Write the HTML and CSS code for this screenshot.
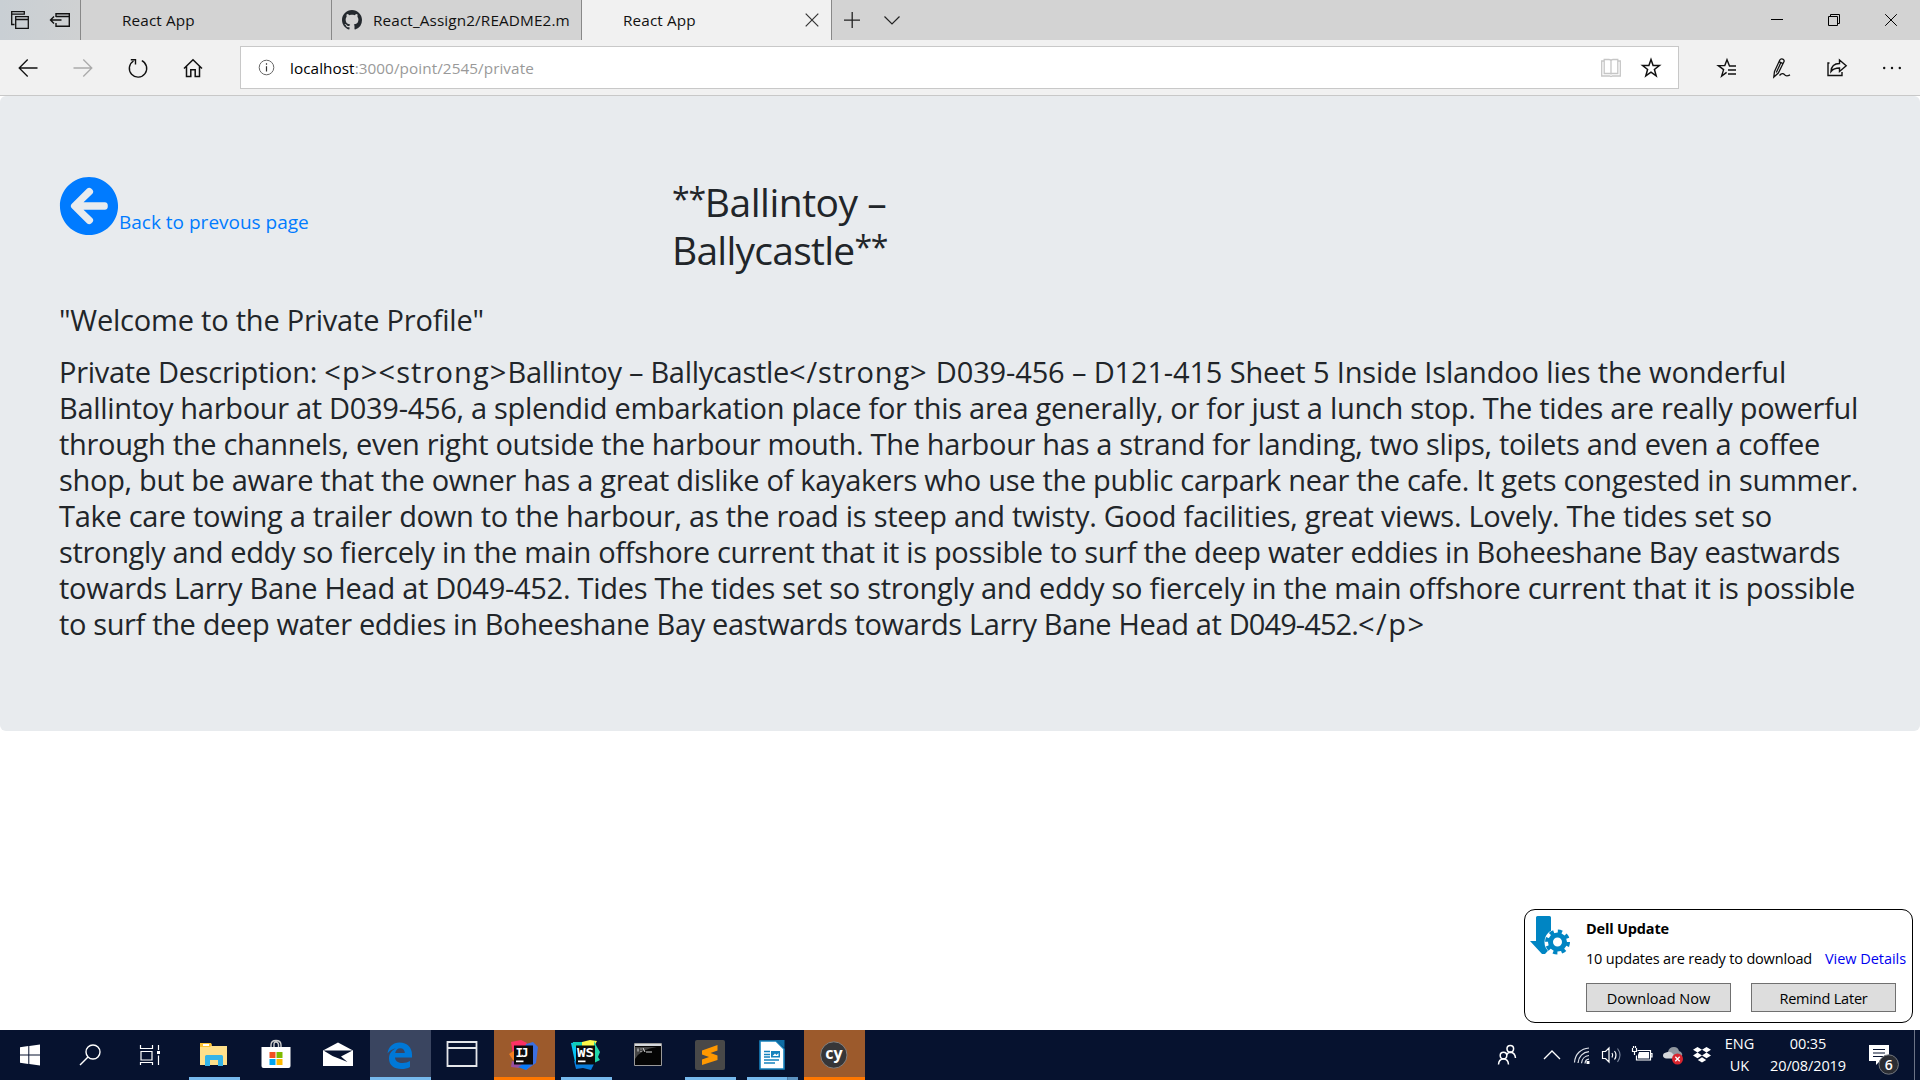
FILE: index.html
```html
<!DOCTYPE html>
<html lang="en">
<head>
<meta charset="utf-8">
<title>React App</title>
<link rel="stylesheet" href="styles.css">
</head>
<body>
<div class="desktop">
  <header class="tabstrip">
    <div class="tab-tools">
      <svg width="20" height="20" viewBox="0 0 20 20" fill="none" stroke="#111" stroke-width="1.300"><path d="M4.500 14.500H1.700V1.700h12.600v3M1.700 4.200h12.600"/><path d="M5.700 6.700h12.600v11.600H5.700zM5.700 9.500h12.600"/></svg>
      <svg width="22" height="20" viewBox="0 0 22 20" fill="none" stroke="#111" stroke-width="1.400"><path d="M7 7V3.700h13.300v12.600H7V13M7 6.500h13.300M1.500 10h11M5 6.500L1.500 10 5 13.500"/></svg>
    </div>
    <div class="tab"><span class="tab-title">React App</span></div>
    <div class="tab tab-git">
      <svg width="20" height="20" viewBox="0 0 16 16" fill="#24292e"><path d="M8 0C3.580 0 0 3.580 0 8c0 3.540 2.290 6.530 5.470 7.590.4.070.55-.17.55-.38 0-.19-.01-.82-.01-1.490-2.010.37-2.530-.49-2.690-.94-.09-.23-.48-.94-.82-1.130-.28-.15-.68-.52-.01-.53.630-.01 1.080.58 1.230.82.720 1.210 1.870.87 2.330.66.070-.52.280-.87.510-1.070-1.780-.2-3.640-.89-3.640-3.950 0-.87.310-1.590.82-2.150-.08-.2-.36-1.020.08-2.120 0 0 .67-.21 2.200.82.640-.18 1.320-.27 2-.27s1.360.09 2 .27c1.530-1.040 2.200-.82 2.200-.82.440 1.100.160 1.920.08 2.120.510.560.82 1.270.82 2.150 0 3.070-1.870 3.750-3.650 3.950.290.250.540.730.540 1.480 0 1.070-.01 1.930-.01 2.200 0 .21.150.460.550.380A8.010 8.010 0 0 0 16 8c0-4.420-3.580-8-8-8z"/></svg>
      <span class="tab-title">React_Assign2/README2.m</span>
    </div>
    <div class="tab tab-active"><span class="tab-title">React App</span>
      <svg width="14" height="14" viewBox="0 0 14 14" fill="none" stroke="#333" stroke-width="1.200"><path d="M.7.7l12.600 12.600M13.300.7L.7 13.300"/></svg>
    </div>
    <div class="tab-new">
      <svg width="18" height="18" viewBox="0 0 18 18" fill="none" stroke="#222" stroke-width="1.300"><path d="M9.200 1v16M1 9.200h16"/></svg>
      <svg width="18" height="18" viewBox="0 0 18 18" fill="none" stroke="#222" stroke-width="1.200"><path d="M1.500 5.500l7.500 7.500 7.500-7.500"/></svg>
    </div>
    <div class="window-controls">
      <span><svg width="14" height="14" viewBox="0 0 14 14" stroke="#000"><path d="M1 6.500h12"/></svg></span>
      <span><svg width="14" height="14" viewBox="0 0 14 14" fill="none" stroke="#000"><path d="M1.500 3.500h9v9h-9zM3.500 3.500v-2h9v9h-2"/></svg></span>
      <span><svg width="14" height="14" viewBox="0 0 14 14" stroke="#000"><path d="M1.200 1.200l11.600 11.600M12.800 1.200L1.200 12.800"/></svg></span>
    </div>
  </header>

  <nav class="toolbar">
    <span class="tool"><svg width="20" height="20" viewBox="0 0 20 20" fill="none" stroke="#111" stroke-width="1.300"><path d="M19.500 10H1.200M9.700 1.500L1.200 10l8.500 8.500"/></svg></span>
    <span class="tool"><svg width="20" height="20" viewBox="0 0 20 20" fill="none" stroke="#aaa" stroke-width="1.300"><path d="M.5 10h18.300M10.300 1.500l8.500 8.500-8.500 8.500"/></svg></span>
    <span class="tool"><svg width="22" height="22" viewBox="0 0 22 22" fill="none" stroke="#111" stroke-width="1.400"><path d="M14.800 3.600A8.700 8.700 0 1 1 6.500 4M3.800 2.700h4.700v4.700"/></svg></span>
    <span class="tool"><svg width="20" height="20" viewBox="0 0 20 20" fill="none" stroke="#111" stroke-width="1.500"><path d="M1 10.500L10 1.700l9 8.800M3.500 8.500v10h4.300v-6.800h4.400v6.800h4.300v-10"/></svg></span>
    <div class="address">
      <svg width="17" height="17" viewBox="0 0 17 17" fill="none" stroke="#666"><circle cx="8.500" cy="8.500" r="7.300"/><path d="M8.500 7.200v5.300M8.500 4.300v1.400" stroke="#333" stroke-width="1.200"/></svg>
      <span class="url"><b>localhost</b>:3000/point/2545/private</span>
      <svg class="book" width="22" height="20" viewBox="0 0 22 20" fill="none" stroke="#c6c6c6" stroke-width="1.300"><path d="M11 3v13.500M4.200 1.500H9q2 0 2 1.500 0-1.500 2-1.500h4.800v14H4.200zM4 3H1.700v15h7.800l1.500.6 1.500-.6h7.800V3H18"/></svg>
      <svg width="22" height="22" viewBox="0 0 22 22" fill="none" stroke="#111" stroke-width="1.500"><path d="M11 2.500l2.100 6.100h6.300l-5 3.900 1.800 6.300L11 15.100l-5.200 3.700 1.800-6.300-5-3.900h6.300z"/></svg>
    </div>
    <span class="tool"><svg width="22" height="22" viewBox="0 0 22 22" fill="none" stroke="#111" stroke-width="1.400"><path d="M19.500 9h-6L11 2.700 8.800 8.600H2.300l5.300 4-2 6.500 5-3.700M12 13h8M12 17h8M13 9h7"/></svg></span>
    <span class="tool"><svg width="22" height="22" viewBox="0 0 22 22" fill="none" stroke="#111" stroke-width="1.300"><path d="M3.500 14.500L8.800 3q1-1.800 3-.8t1 2.800L7.300 16l-4.500 4zM8 4.700l4 2M9.800 5.800l-4.500 9.700"/><path d="M8.500 18.500c2-2.500 4-2.200 5-.8s2.500 1.800 5.500.2"/></svg></span>
    <span class="tool"><svg width="22" height="22" viewBox="0 0 22 22" fill="none" stroke="#111" stroke-width="1.400"><path d="M3.500 6H2v12.500h14V15"/><path d="M5 14.500c.3-5 3.200-8 8.500-8V3l6.700 5.800-6.700 5.700V11C9 11 7 12 5 14.500z"/></svg></span>
    <span class="tool"><svg width="22" height="22" viewBox="0 0 22 22" fill="#111"><circle cx="3.200" cy="11" r="1.200"/><circle cx="11" cy="11" r="1.200"/><circle cx="18.800" cy="11" r="1.200"/></svg></span>
  </nav>

  <main class="page">
    <section class="jumbotron">
      <div class="heading-row">
        <a class="back"><svg width="60" height="60" viewBox="0 0 512 512" fill="currentColor"><path d="M256 504C119 504 8 393 8 256S119 8 256 8s248 111 248 248-111 248-248 248zm28.900-143.600L209.400 288H392c13.300 0 24-10.700 24-24v-16c0-13.300-10.700-24-24-24H209.400l75.500-72.400c9.700-9.300 9.900-24.800.4-34.300l-11-10.900c-9.400-9.400-24.600-9.400-33.900 0L107.700 239c-9.400 9.400-9.400 24.600 0 33.900l132.700 132.700c9.400 9.400 24.600 9.400 33.900 0l11-10.900c9.500-9.500 9.300-25-.4-34.300z"/></svg><span>Back to prevous page</span></a>
        <h2><span class="stars">**</span>Ballintoy –<br><span class="tight">Ballycastle</span><span class="stars">**</span></h2>
      </div>
      <h4 class="welcome">"Welcome to the Private Profile"</h4>
      <h4 class="description">
        <span class="l1"><span class="l1-label">Private Description: </span><span class="l1-open">&lt;p&gt;&lt;strong&gt;</span><span class="l1-label">Ballintoy – Ballycastle</span><span class="l1-close">&lt;/strong&gt; </span>D039-456 – D121-415 Sheet 5 Inside Islandoo lies the wonderful</span>
        <span class="l2">Ballintoy harbour at D039-456, a splendid embarkation place for this area generally, or for just a lunch stop. The tides are really powerful</span>
        <span class="l3">through the channels, even right outside the harbour mouth. The harbour has a strand for landing, two slips, toilets and even a coffee</span>
        <span class="l4">shop, but be aware that the owner has a great dislike of kayakers who use the public carpark near the cafe. It gets congested in summer.</span>
        <span class="l5">Take care towing a trailer down to the harbour, as the road is steep and twisty. Good facilities, great views. Lovely. The tides set so</span>
        <span class="l6">strongly and eddy so fiercely in the main offshore current that it is possible to surf the deep water eddies in Boheeshane Bay eastwards</span>
        <span class="l7">towards Larry Bane Head at D049-452. Tides The tides set so strongly and eddy so fiercely in the main offshore current that it is possible</span>
        <span class="l8">to surf the deep water eddies in Boheeshane Bay eastwards towards Larry Bane Head at <span class="l8-ref">D049-452.</span><span class="l8-close">&lt;/p&gt;</span></span>
      </h4>
    </section>
  </main>

  <footer class="taskbar">
    <span class="task"><svg width="32" height="32" viewBox="0 0 32 32" fill="#fff"><path d="M6 8.200l8.300-1.200v8.500H6zM15.300 6.900L26 5.500v10H15.300zM6 16.500h8.300V25L6 23.800zM15.300 16.500H26v10l-10.700-1.400z"/></svg></span>
    <span class="task"><svg width="32" height="32" viewBox="0 0 32 32" fill="none" stroke="#fff" stroke-width="1.400"><circle cx="18" cy="13" r="7"/><path d="M13 18l-8 8"/></svg></span>
    <span class="task"><svg width="32" height="32" viewBox="0 0 32 32" fill="none" stroke="#fff" stroke-width="1.200"><path d="M4.500 6v3.500h12V6M5 12.500h11v8.500H5zM4.500 26v-2.500h12V26M22.500 6v5M22.500 16.500V26"/><path d="M21 12h3v3h-3z" fill="#fff" stroke="none"/></svg></span>
    <span class="task running"><svg width="32" height="32" viewBox="0 0 32 32"><path d="M2 4h10l2 3h15v19H2z" fill="#ffe08a"/><path d="M2 4h11l1 2-2 2H2z" fill="#fcc233"/><path d="M5 5h6v2H5z" fill="#fff"/><path d="M7 27V17.500q0-1.500 1.500-1.500h15q1.500 0 1.500 1.500V27h-5v-6h-8v6z" fill="#35b4e8"/></svg></span>
    <span class="task"><svg width="32" height="32" viewBox="0 0 32 32"><path d="M11 9V6q0-4.500 5-4.500T21 6v3M14 8V5.500Q14 3 16 3t2.500 2.500V8" fill="none" stroke="#ccc" stroke-width="1.400"/><path d="M1.500 8h29v19q0 2-2 2h-25q-2 0-2-2z" fill="#fff"/><path d="M9.500 13h6v6h-6z" fill="#f25022"/><path d="M16.500 13h6v6h-6z" fill="#7fba00"/><path d="M9.500 20h6v6h-6z" fill="#00a4ef"/><path d="M16.500 20h6v6h-6z" fill="#ffb900"/></svg></span>
    <span class="task"><svg width="32" height="32" viewBox="0 0 32 32"><path d="M1 11.500L16 3.500l15 8V27H1z" fill="#fff"/><path d="M1.500 11.500h29L19 17.500l6.500 5.500-15-6z" fill="#06122f"/></svg></span>
    <span class="task running focused"><svg width="32" height="32" viewBox="0 0 32 32"><path d="M3.500 14.500C4.500 7.500 9 3.500 15.500 3.500c8 0 12.500 5.500 12.500 12v3H11c.3 4 3.500 5.500 7.500 5.500 3 0 5.500-.8 7.500-2v6c-2.500 1.400-5.500 2-8.500 2C10 30 5 26 5 19.500 5 14.500 8 11 12 9.200c-3.500.5-6.500 2.500-8.500 5.300zM11.200 14h9.600c0-3-1.800-4.700-4.500-4.700-2.600 0-4.500 1.700-5.100 4.700z" fill="#0078d7"/></svg></span>
    <span class="task"><svg width="32" height="32" viewBox="0 0 32 32" fill="none" stroke="#e4e6ea" stroke-width="1.800"><path d="M1.500 3h29v24h-29zM1.500 9h29"/></svg></span>
    <span class="task alert"><svg width="32" height="32" viewBox="0 0 32 32"><path d="M3 3l10-2 6 3-3 12H5z" fill="#fc3164"/><path d="M1 15l6-4 4 12-6-2z" fill="#f57f20"/><path d="M18 5l7-2 5 5-2 16-10 7-6-4z" fill="#3b6fe0"/><path d="M4 22l9 3-2 4-8-1z" fill="#9a4fa0"/><path d="M20 24l5-2-7 9-8-3z" fill="#087cfa"/><path d="M6 6.500h19v19H6z" fill="#0b0b0b"/><path d="M8 21.500h7.500v1.700H8z" fill="#fff"/><text x="7.500" y="17.500" class="mono" textLength="13">IJ</text></svg></span>
    <span class="task running"><svg width="32" height="32" viewBox="0 0 32 32"><path d="M1 4l9-1 4 22-8 3z" fill="#07c3f2"/><path d="M12 3l8-2 7 1-4 7-12-1z" fill="#fcf84a"/><path d="M24 2l3 6 3 5-2 5 2 3-6 3z" fill="#21d7a8"/><path d="M4 22l14 2 6 1-3 6-8-2-7 1z" fill="#087cda"/><path d="M3 3h9v5H3z" fill="#12cdb8"/><path d="M6 6.500h19v19H6z" fill="#0b0b0b"/><path d="M8 21.500h7.500v1.700H8z" fill="#fff"/><text x="7" y="17.500" class="mono" textLength="17" lengthAdjust="spacingAndGlyphs">WS</text></svg></span>
    <span class="task"><svg width="32" height="32" viewBox="0 0 32 32"><path d="M2.500 4.500h27v22h-27z" fill="#050505" stroke="#999" stroke-width="1"/><path d="M3 5h26v2H3z" fill="#d5d8dc"/><path d="M3 8h22Q9 10 3 20z" fill="#444"/><path d="M6 9.500v3M9 9.500v1M9 12v1M11 9l2 4M14 13h6" stroke="#ddd" fill="none"/></svg></span>
    <span class="task running"><svg width="32" height="32" viewBox="0 0 32 32"><rect x="1" y="1" width="30" height="30" rx="2" fill="#484848"/><path d="M8 11.500L23.500 6v5.500l-7 2.500 7 2.500V21L8 26v-5.500l7-2.500-7-2.500z" fill="#ff9800"/></svg></span>
    <span class="task running stacked"><svg width="32" height="32" viewBox="0 0 32 32"><path d="M4 2h16l8 8v20H4z" fill="#fff" stroke="#1682bd" stroke-width="1.600"/><path d="M19 1h9.500v8z" fill="#0e6ca3"/><path d="M8 12.500h6M8 15.500h6M8 18h6M8 21h15M8 24h11" stroke="#1682bd" stroke-width="1.400"/><path d="M15 12h9v6.500h-9z" fill="#1682bd"/><path d="M16.500 17l2.500-2.500 1.500 1.500 2-2v3z" fill="#fff"/></svg></span>
    <span class="task alert"><svg width="32" height="32" viewBox="0 0 32 32"><circle cx="15.800" cy="16" r="13.200" fill="#363638" stroke="#85817e" stroke-width="1"/><text x="16" y="20" text-anchor="middle" class="cy">cy</text></svg></span>

    <div class="tray">
      <span class="slot people"><svg width="22" height="22" viewBox="0 0 22 22" fill="none" stroke="#fff" stroke-width="1.500"><circle cx="14.300" cy="4.800" r="3.300"/><path d="M10.500 11q1.500-2.800 4-2.800 4.500.3 5 5.800"/><circle cx="7.500" cy="11.500" r="3.300"/><path d="M2.500 20.500q.3-5.500 5-5.500t5 5.500"/></svg></span>
      <span class="slot"><svg width="18" height="12" viewBox="0 0 18 12" fill="none" stroke="#fff" stroke-width="1.300"><path d="M1 10l8-8 8 8"/></svg></span>
      <span class="slot"><svg width="20" height="20" viewBox="0 0 20 20" fill="none" stroke="#fff" stroke-width="1.200"><path d="M2.500 17.500C3 9 9 3.500 17 3M6 18C6.500 11.500 11 7.200 17 6.700M9.500 18.300c.3-4.500 3.500-7.500 7.500-7.800M13 18.500c.2-2.500 1.800-4.200 4-4.300" stroke="#dfe3ea"/><path d="M14.500 16h3v3h-3z" fill="#fff" stroke="none"/></svg></span>
      <span class="slot"><svg width="22" height="20" viewBox="0 0 22 20" fill="none" stroke="#fff" stroke-width="1.200"><path d="M1.500 6.500h3L8 3v14l-3.500-3.500h-3zM11 8q1.500 2 0 4.500M13.500 6q3 4 0 8.500"/><path d="M16.500 3.500q5 6.500 0 13.500" stroke="#78839a"/></svg></span>
      <span class="slot"><svg width="22" height="18" viewBox="0 0 22 18" fill="none" stroke="#fff" stroke-width="1.200"><path d="M6.500 4.500h13V14h-14V9.500M19.500 7.500h1.500V11h-1.500"/><path d="M8 6h10v6.500H7V9z" fill="#fff" stroke="none"/><path d="M1.500 2v3.500h4V2M2.500 0v2M4.500 0v2M3.500 5.500V9"/></svg></span>
      <span class="slot cloud"><svg width="22" height="20" viewBox="0 0 22 20"><path d="M6 7q1-5 6-5 4 0 5 4l2 1q2 2 1 4H6z" fill="#8f969f"/><path d="M4 7.500q5-2 7.500 2l4 4H4.500Q1 13 1 10.500T4 7.500z" fill="#d4d7db"/><circle cx="15.500" cy="14" r="5.500" fill="#d9252e"/><path d="M13.300 11.800l4.400 4.400M17.700 11.800l-4.400 4.400" stroke="#fff" stroke-width="1.300"/></svg></span>
      <span class="slot dropbox"><svg width="18" height="18" viewBox="0 0 18 18" fill="#fff"><path d="M4.500 1L9 3.800 4.500 6.600 0 3.800zM13.500 1L18 3.800l-4.500 2.800L9 3.800zM4.500 6.600L9 9.400l-4.500 2.800L0 9.400zM13.500 6.600L18 9.400l-4.500 2.800L9 9.400zM9 11.200l4.200 2.700L9 16.600l-4.200-2.700z"/></svg></span>
      <span class="lang"><span>ENG</span><span>UK</span></span>
      <span class="clock"><span>00:35</span><span class="date">20/08/2019</span></span>
      <span class="action"><svg width="40" height="44" viewBox="0 -6 40 44"><path d="M6 6h20v16H17l-4 4v-4H6z" fill="#fff"/><path d="M10 10.500h12M10 14h12M10 17.500h12" stroke="#06122f" stroke-width="1.200"/><circle cx="25.700" cy="25.500" r="9.700" fill="#2b2d33" stroke="#75797f" stroke-width="1"/><text x="25.700" y="30.700" text-anchor="middle" class="count">6</text></svg></span>
    </div>
  </footer>

  <aside class="toast">
    <svg width="42" height="42" viewBox="0 0 42 42"><path d="M7 2.500q0-1.500 1.500-1.500h12q1.500 0 1.500 1.500V26h6L16 39H13L1 26h6z" fill="#0085c3"/><circle cx="28.500" cy="27" r="13" fill="#fff"/><circle cx="28.500" cy="27" r="7" fill="none" stroke="#0085c3" stroke-width="5"/><circle cx="28.500" cy="27" r="10.500" fill="none" stroke="#0085c3" stroke-width="4" stroke-dasharray="4.200 4.047"/></svg>
    <div class="toast-body">
      <strong>Dell Update</strong>
      <p>10 updates are ready to download<a>View Details</a></p>
      <div class="toast-actions"><button>Download Now</button><button class="later">Remind Later</button></div>
    </div>
  </aside>
</div>
</body>
</html>
```
FILE: styles.css
```css
* { box-sizing: border-box; }
body { margin: 0; font-family: "Open Sans", "Noto Sans", sans-serif; color: #212529; }
svg { display: block; flex: none; }

.desktop { position: relative; display: flex; flex-direction: column; width: 1920px; height: 1080px; overflow: hidden; background: #fff; }

/* Browser tabs */
.tabstrip { display: flex; height: 40px; background: #d3d3d3; font-size: 15.3px; letter-spacing: .12px; color: #111; }
.tab-tools { display: flex; align-items: center; gap: 19px; width: 80px; padding-left: 10px; background: linear-gradient(90deg, #c9cfd4, #cfd1d2); }
.tab { display: flex; align-items: center; width: 251px; padding-left: 41px; border-left: 1px solid #888; }
.tab-title { white-space: nowrap; line-height: 20px; }
.tab-git { width: 250px; padding-left: 10px; gap: 11px; }
.tab-active { width: 251px; background: #f1f1f1; border-right: 1px solid #888; justify-content: space-between; padding-right: 12px; }
.tab-new { display: flex; align-items: center; gap: 22px; padding-left: 11px; }
.window-controls { display: flex; margin-left: auto; padding-right: 1px; }
.window-controls span { display: flex; align-items: center; justify-content: center; width: 57px; }

/* Address bar */
.toolbar { display: flex; align-items: center; height: 56px; background: #f1f1f1; border-bottom: 1px solid #c8c8c8; }
.tool { display: flex; justify-content: center; width: 55px; }
.address { display: flex; align-items: center; width: 1439px; height: 43px; margin: 0 20px; padding: 0 16px 0 17px; background: #fff; border: 1px solid #c8c8c8; }
.url { margin-left: 15px; padding-top: 1px; font-size: 15.3px; letter-spacing: .06px; color: #999; white-space: nowrap; }
.url b { font-weight: 400; color: #000; }
.book { margin-left: auto; margin-right: 18px; }

/* Page content */
.page { flex: 1; }
.jumbotron { height: 635px; padding: 80px 59px; background: #e8ebee; border-radius: 6px; }
.jumbotron h2, .jumbotron h4 { margin: 0; font-weight: 400; white-space: nowrap; }
.heading-row { display: grid; grid-template-columns: 613px auto; height: 126px; }
.back { display: flex; align-items: flex-start; color: #007bff; font-size: 19px; line-height: 30px; white-space: nowrap; }
.back span { margin-top: 31px; }
.jumbotron h2 { font-size: 39px; line-height: 48px; padding-top: 2px; letter-spacing: -.5px; }
.stars { font-size: 32px; line-height: 0; vertical-align: 6px; letter-spacing: -1.200px; }
.tight { letter-spacing: -.75px; }
.jumbotron h4 { font-size: 29px; line-height: 36px; }
.welcome { letter-spacing: -.21px; }
.description { display: flex; flex-direction: column; align-items: flex-start; padding-top: 16px; }
.description span { white-space: pre; }
.l1 { letter-spacing: -.15px; }
.l1-label { letter-spacing: -.29px; }
.l1-open { letter-spacing: 1.100px; }
.l1-close { letter-spacing: .85px; }
.l2 { letter-spacing: -.307px; }
.l3 { letter-spacing: -.319px; }
.l4 { letter-spacing: -.306px; }
.l5 { letter-spacing: -.281px; }
.l6 { letter-spacing: -.331px; }
.l7 { letter-spacing: -.279px; }
.l8 { letter-spacing: -.360px; }
.l8-ref { letter-spacing: -.9px; }
.l8-close { letter-spacing: 1.500px; }

/* Taskbar */
.taskbar { display: flex; height: 50px; background: #06122f; color: #fff; }
.task { display: flex; align-items: center; justify-content: center; position: relative; width: 61px; margin-right: 1px; padding-right: 1px; }
.task:nth-child(-n+2) { margin-right: 0; }
.running::after { content: ""; position: absolute; left: 5px; right: 5px; bottom: 0; height: 3px; background: #76b9ed; }
.focused { background: #3a4560; }
.focused::after, .alert::after { left: 0; right: 0; }
.stacked::after { background: linear-gradient(90deg, #76b9ed 40px, #3d6288 40px, #5c92c0 41px); }
.alert { background: #9c5a2c; }
.alert::after { content: ""; position: absolute; bottom: 0; height: 3px; background: #ff7700; }
.mono { font: 700 12.500px "DejaVu Sans Mono", monospace; fill: #fff; }
.cy { font: 700 16px "Open Sans", sans-serif; fill: #fff; }

.tray { display: flex; align-items: stretch; margin-left: auto; padding-right: 5px; font-size: 14.500px; }
.slot { display: flex; align-items: center; justify-content: center; width: 30px; }
.people { width: 46px; margin-right: 7px; }
.cloud { width: 31px; }
.dropbox { width: 27px; }
.lang, .clock { display: flex; flex-direction: column; align-items: center; justify-content: center; width: 49px; line-height: 22.500px; }
.clock { width: 88px; letter-spacing: -.1px; }
.action { display: flex; align-items: center; width: 63px; padding-left: 11px; border-right: 1px solid #6b7386; }
.count { font: 600 14px "Open Sans", sans-serif; fill: #fff; }

/* Update notification */
.toast { position: absolute; left: 1524px; top: 909px; display: flex; width: 389px; height: 114px; padding: 5px 0 0 4px; background: #fff; border: 1px solid #000; border-radius: 11px; color: #000; font-size: 14.500px; line-height: 20px; white-space: nowrap; }
.toast-body { padding-left: 15px; }
.toast strong { display: block; padding-top: 4px; letter-spacing: -.17px; }
.toast p { margin: 10px 0 0; letter-spacing: -.176px; }
.toast a { color: #0000f0; margin-left: 13px; letter-spacing: -.05px; }
.toast-actions { display: flex; gap: 20px; margin-top: 14px; }
.toast button { width: 145px; height: 29px; padding: 2px 0 0; font: inherit; letter-spacing: 0; color: #000; background: #ddd; border: 1px solid #707070; }
.toast .later { letter-spacing: -.2px; }
```
